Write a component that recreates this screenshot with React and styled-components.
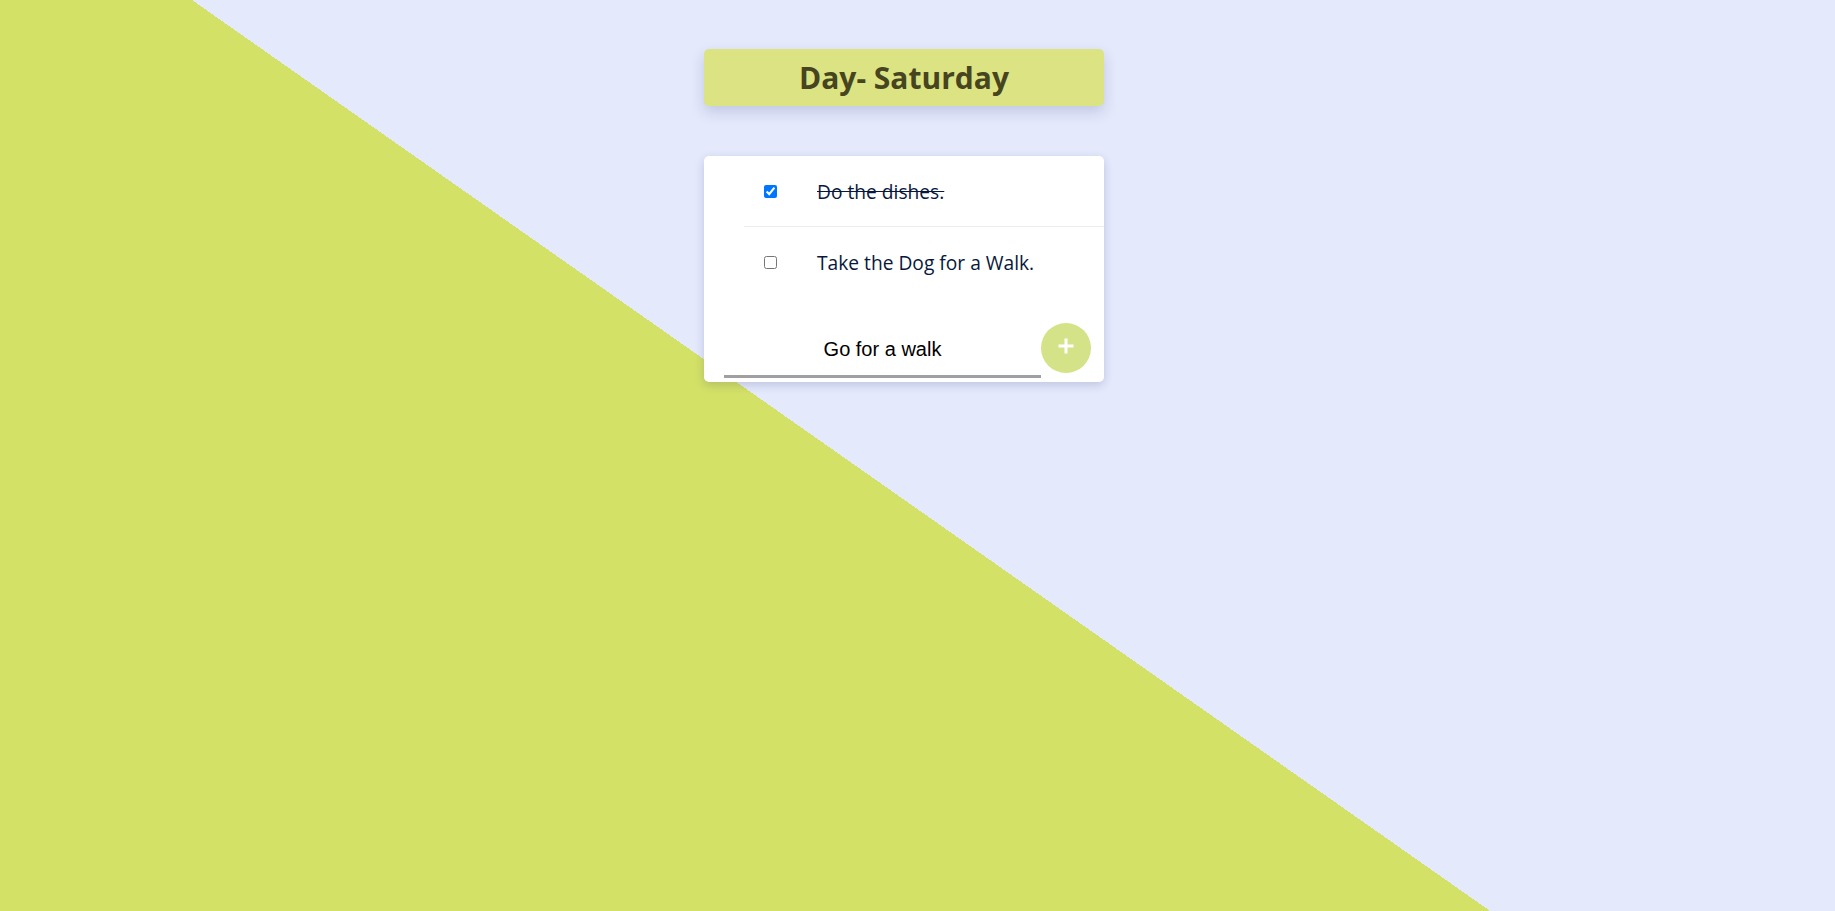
import { useState } from "react";
import styled, { createGlobalStyle } from "styled-components";

const GlobalStyle = createGlobalStyle`
    html, body {
        margin: 0;
        padding: 0;
        min-height: 100%;
    }
    body {
        min-height: 100vh;
        background: linear-gradient(35.06deg, #d3e166 47.56%, #e4e9fc 47.56%);
        background-attachment: fixed;
        font-family: "Open Sans", "Liberation Sans", sans-serif;
    }
`;

const Page = styled.div`
    display: flex;
    flex-direction: column;
    align-items: center;
    padding: 49px 27px 0 0;
    min-height: 100vh;
    box-sizing: border-box;
`;

const Heading = styled.div`
    width: 400px;
    height: 57px;
    display: flex;
    align-items: center;
    justify-content: center;
    background-color: #dce383;
    border-radius: 5px;
    box-shadow: 0 6px 14px rgba(40, 50, 110, 0.18);
`;

const Title = styled.h1`
    margin: 0;
    font-family: "Open Sans", sans-serif;
    font-size: 30px;
    font-weight: 700;
    color: #46451f;
`;

const Card = styled.div`
    width: 400px;
    margin-top: 50px;
    background-color: #ffffff;
    border-radius: 5px;
    box-shadow: 0 3px 10px rgba(40, 50, 110, 0.2);
`;

const List = styled.ul`
    list-style: none;
    margin: 0;
    padding: 0 0 0 40px;
`;

const Item = styled.li`
    display: flex;
    align-items: center;
    height: 70px;
    padding-left: 20px;
    border-bottom: 1px solid #ececec;

    &:last-child {
        border-bottom: none;
    }
`;

const Check = styled.input`
    width: 13px;
    height: 13px;
    margin: 0 40px 0 0;
`;

const Label = styled.span`
    font-family: "Open Sans", sans-serif;
    font-size: 19.2px;
    font-weight: 500;
    color: #08183c;
    text-decoration: ${(props) => (props.$done ? "line-through" : "none")};
`;

const Form = styled.form`
    display: flex;
    align-items: flex-end;
    padding: 26px 13px 4px 20px;
`;

const TaskInput = styled.input`
    flex: 1;
    min-width: 0;
    height: 54px;
    box-sizing: border-box;
    border: none;
    border-bottom: 3px solid #a0a0a0;
    outline: none;
    background: transparent;
    text-align: center;
    font-family: "Liberation Sans", Arial, sans-serif;
    font-size: 20px;
    color: #000000;
`;

const AddButton = styled.button`
    width: 50px;
    height: 50px;
    flex-shrink: 0;
    margin-bottom: 5px;
    padding: 0;
    border: none;
    border-radius: 50%;
    background-color: #d4e388;
    display: flex;
    align-items: center;
    justify-content: center;
    cursor: pointer;
`;

const PlusIcon = () => (
    <svg width="16" height="16" viewBox="0 0 16 16" style={{ marginTop: -5 }}>
        <path d="M8 0.5V15.5M0.5 8H15.5" stroke="#ffffff" strokeWidth="3" />
    </svg>
);

const App = () => {
    const [tasks, setTasks] = useState([
        { id: 1, text: "Do the dishes.", done: true },
        { id: 2, text: "Take the Dog for a Walk.", done: false },
    ]);
    const [value, setValue] = useState("Go for a walk");

    const toggle = (id) => {
        setTasks(tasks.map((t) => (t.id === id ? { ...t, done: !t.done } : t)));
    };

    const addTask = (e) => {
        e.preventDefault();
        if (!value.trim()) return;
        setTasks([...tasks, { id: Date.now(), text: value, done: false }]);
        setValue("");
    };

    return (
        <>
            <GlobalStyle />
            <Page>
                <Heading>
                    <Title>Day- Saturday</Title>
                </Heading>
                <Card>
                    <List>
                        {tasks.map((task) => (
                            <Item key={task.id}>
                                <Check type="checkbox" checked={task.done} onChange={() => toggle(task.id)} />
                                <Label $done={task.done}>{task.text}</Label>
                            </Item>
                        ))}
                    </List>
                    <Form onSubmit={addTask}>
                        <TaskInput value={value} onChange={(e) => setValue(e.target.value)} />
                        <AddButton type="submit">
                            <PlusIcon />
                        </AddButton>
                    </Form>
                </Card>
            </Page>
        </>
    );
};

export default App;
